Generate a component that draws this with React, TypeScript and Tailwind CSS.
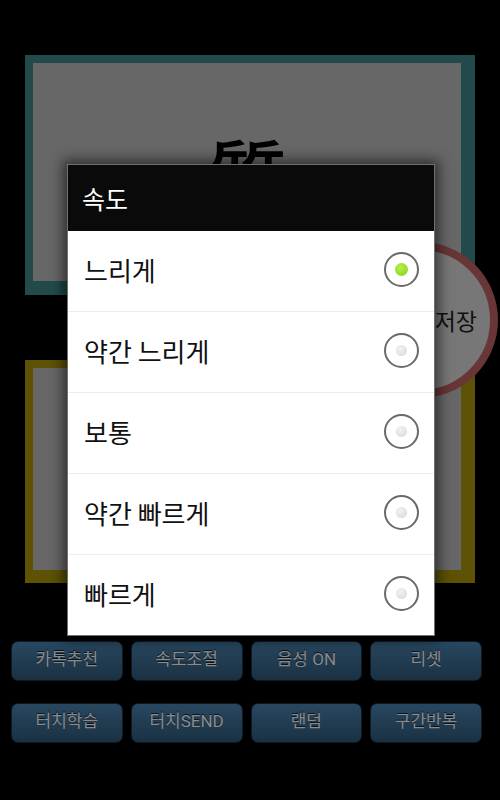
import React from "react";

const options = ["느리게", "약간 느리게", "보통", "약간 빠르게", "빠르게"];
const buttons = ["카톡추천", "속도조절", "음성 ON", "리셋", "터치학습", "터치SEND", "랜덤", "구간반복"];

export default function App() {
  return (
    <div
      className="relative w-[500px] h-[800px] bg-black overflow-hidden"
      style={{ fontFamily: "Roboto, 'Noto Sans CJK KR', sans-serif" }}
    >
      {/* top panel */}
      <div className="mt-[55px] ml-[25px] w-[450px] h-[240px] bg-[#234a4a] pl-[8px] pt-[8px] pr-[14px] pb-[14px]">
        <div className="w-full h-full bg-[#676767] flex items-center justify-center">
          <span className="text-[80px] leading-none text-black font-medium" style={{ fontFamily: "'Noto Sans CJK KR', sans-serif" }}>質</span>
        </div>
      </div>

      {/* bottom panel */}
      <div className="mt-[65px] ml-[25px] w-[450px] h-[223px] bg-[#5d5205] pl-[8px] pt-[8px] pr-[14px] pb-[13px]">
        <div className="w-full h-full bg-[#676767]" />
      </div>

      {/* buttons */}
      <div className="mt-[58px] ml-[11px] w-[471px] grid grid-cols-4 gap-x-[8px] gap-y-[22px]">
        {buttons.map((b) => (
          <div
            key={b}
            className="h-[40px] rounded-[7px] border border-[#0e1a24] bg-gradient-to-b from-[#284860] to-[#1a3143] flex items-center justify-center text-[17px] text-[#8b8b8b] pb-[3px]"
            style={{ textShadow: "0 -1px 0 #0a141c" }}
          >
            {b}
          </div>
        ))}
      </div>

      {/* red circle */}
      <div className="absolute left-[342px] top-[242px] w-[156px] h-[156px] rounded-full border-[8px] border-[#683636] bg-[#777777] flex items-center justify-end pr-[13px]">
        <span className="text-[23px] text-[#111]" style={{ fontFamily: "'Noto Sans CJK KR', sans-serif" }}>저장</span>
      </div>

      {/* dialog */}
      <div
        className="absolute left-[67px] top-[164px] w-[368px] border border-[#707070] bg-white shadow-[0_0_12px_4px_rgba(0,0,0,0.55)]"
        style={{ fontFamily: "'Noto Sans CJK KR', sans-serif" }}
      >
        <div className="h-[66px] bg-[#0a0a0a] flex items-center pl-[14px]">
          <span className="text-[25px] text-white mt-[2px]">속도</span>
        </div>
        {options.map((o, i) => (
          <div key={o} className={`flex items-center justify-between pl-[16px] pr-[15px] ${i > 0 ? "border-t border-[#ececec] h-[81px]" : "h-[80px]"}`}>
            <span className="text-[26px] text-[#111] mb-[4px]">{o}</span>
            <div className="w-[35px] h-[35px] mb-[4px] rounded-full border-2 border-[#6a6a6a] flex items-center justify-center bg-white">
              {i === 0 ? (
                <div className="w-[13px] h-[13px] rounded-full bg-[radial-gradient(circle_at_40%_35%,#b6f04a,#82d012)]" />
              ) : (
                <div className="w-[11px] h-[11px] rounded-full bg-[radial-gradient(circle_at_40%_35%,#f2f2f2,#d6d6d6)]" />
              )}
            </div>
          </div>
        ))}
      </div>
    </div>
  );
}
